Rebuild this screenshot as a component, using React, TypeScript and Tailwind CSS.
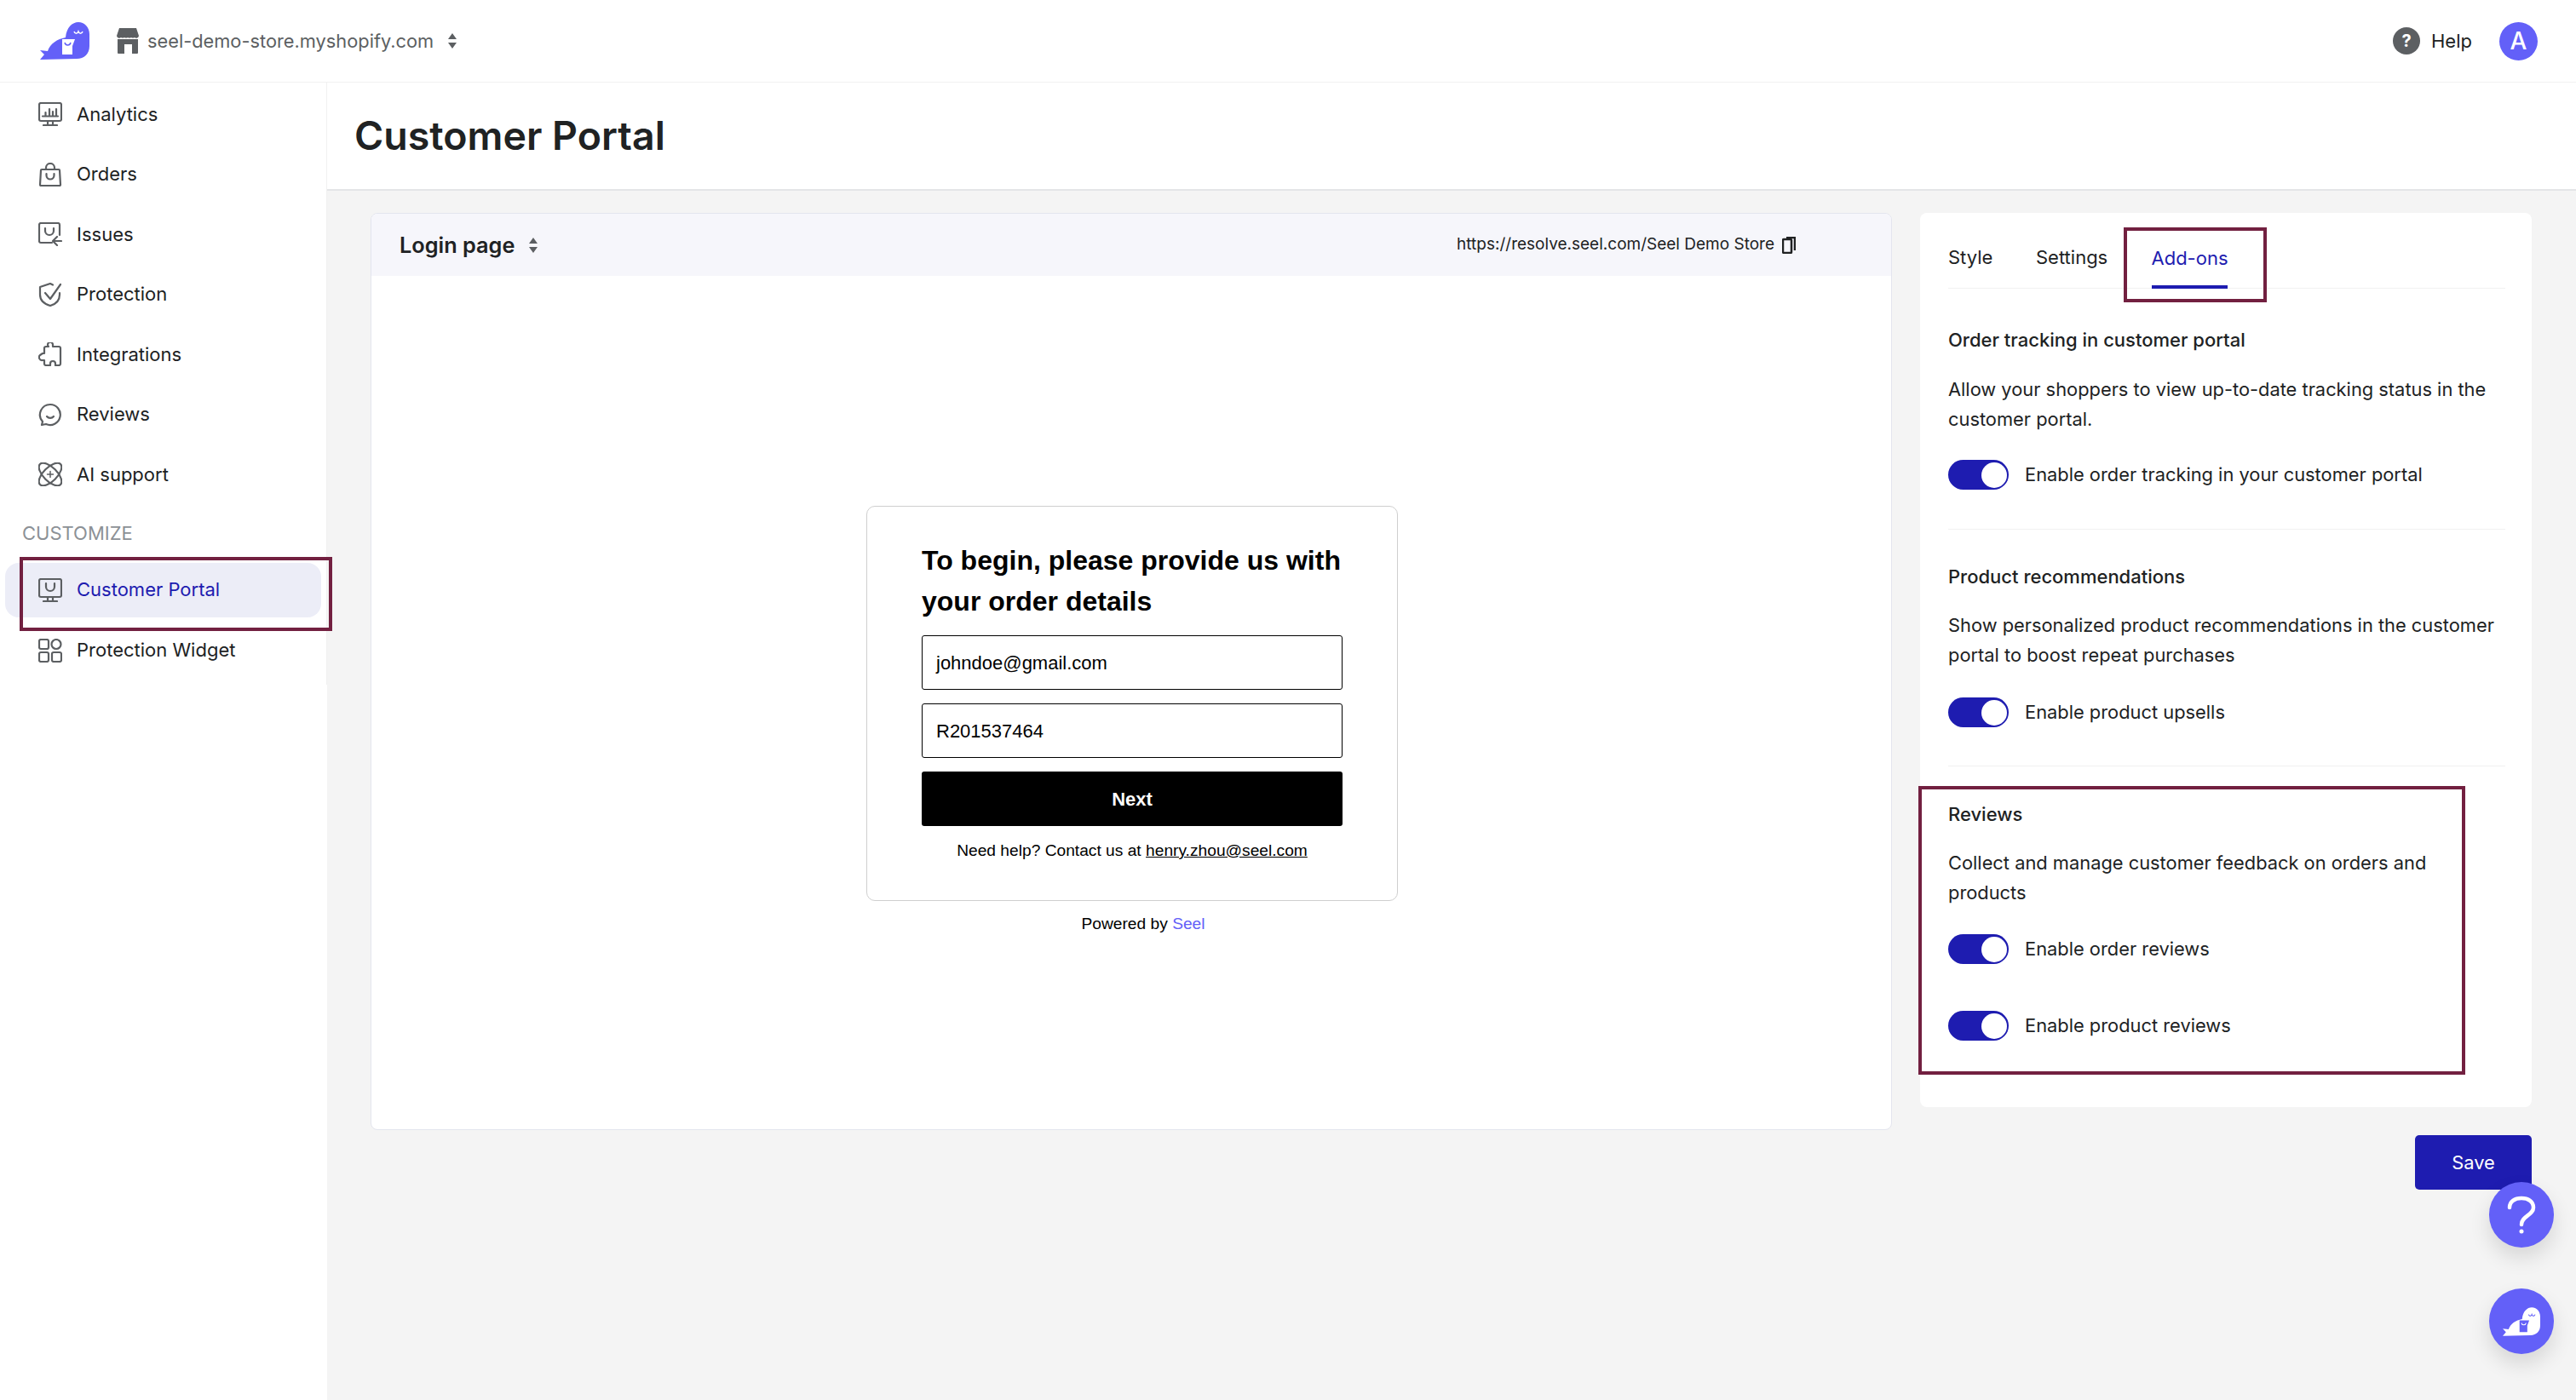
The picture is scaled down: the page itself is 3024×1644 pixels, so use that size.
import React from "react";

const Stroke = ({ children, size = 28 }: { children: React.ReactNode; size?: number }) => (
  <svg width={size} height={size} viewBox="0 0 28 28" fill="none" stroke="#5c5f62" strokeWidth="2.200" strokeLinecap="round" strokeLinejoin="round" className="shrink-0">
    {children}
  </svg>
);

const icons: Record<string, React.ReactNode> = {
  analytics: (
    <Stroke>
      <rect x="1" y="1" width="26" height="21" rx="2" />
      <path d="M5 16.500h18M8.500 16v-4M13 16V8M17 16v-5M21 16V8M11 22v5M17 22v5M6 27h16" />
    </Stroke>
  ),
  orders: (
    <Stroke>
      <path d="M4 8h20a1 1 0 0 1 1 1l1 17a1 1 0 0 1-1 1H3a1 1 0 0 1-1-1L3 9a1 1 0 0 1 1-1z" />
      <path d="M9 8V6a5 5 0 0 1 10 0v2M9.500 13v2a4.500 4.500 0 0 0 9 0v-2" />
    </Stroke>
  ),
  issues: (
    <Stroke>
      <path d="M16 24H3a2 2 0 0 1-2-2V3a2 2 0 0 1 2-2h20a2 2 0 0 1 2 2v12" />
      <path d="M8 7v3a5 5 0 0 0 10 0V7M27 22H18M22 17l-5 5 5 5" />
    </Stroke>
  ),
  protection: (
    <Stroke>
      <path d="M17 2.500 14 1 2 5v9c0 7 5 11 12 13 7-2 11-6 11-13v-2" />
      <path d="M8 12l6 7L26 2" />
    </Stroke>
  ),
  integrations: (
    <Stroke>
      <path d="M9 5h3a3 3 0 1 1 5-2v2h7a2 2 0 0 1 2 2v18a2 2 0 0 1-2 2h-4v-2a3 3 0 0 0-6 0v2H9a2 2 0 0 1-2-2v-4H5a3.500 3.500 0 0 1-3-6l3-2h2V7a2 2 0 0 1 2-2z" />
    </Stroke>
  ),
  reviews: (
    <Stroke>
      <path d="M14 2a12 12 0 1 1-5 23l-5 1 1-4A12 12 0 0 1 14 2z" />
      <path d="M10 16c2 2.500 6 2.500 8 0" />
    </Stroke>
  ),
  ai: (
    <Stroke>
      <ellipse cx="14" cy="14" rx="17" ry="8" transform="rotate(45 14 14)" />
      <ellipse cx="14" cy="14" rx="17" ry="8" transform="rotate(-45 14 14)" />
      <path d="M14 10.500v7M10.500 14h7" strokeWidth="1.500" />
    </Stroke>
  ),
  portal: (
    <Stroke>
      <rect x="1" y="1" width="26" height="21" rx="2" />
      <path d="M9 6v4a5 5 0 0 0 10 0V6M11 22v5M17 22v5M6 27h16" />
    </Stroke>
  ),
  widget: (
    <Stroke>
      <rect x="1" y="1" width="11" height="11" rx="2" />
      <circle cx="21" cy="6.500" r="5.500" />
      <rect x="1" y="16" width="11" height="11" rx="2" />
      <rect x="16" y="16" width="11" height="11" rx="2" />
    </Stroke>
  ),
};

const nav = [
  ["analytics", "Analytics"],
  ["orders", "Orders"],
  ["issues", "Issues"],
  ["protection", "Protection"],
  ["integrations", "Integrations"],
  ["reviews", "Reviews"],
  ["ai", "AI support"],
];

const Seal = ({ w, h, body, bag }: { w: number; h: number; body: string; bag: string }) => (
  <svg width={w} height={h} viewBox="0 0 58 44" className="shrink-0">
    <path
      fill={body}
      d="M0 33 L9 34 C12 25 20 20 30 18 C31 6 38 0 45 0 C52 0 58 6 58 14 L58 28 C58 37 52 43 43 43 L0 44 L5 38 Z"
    />
    <path fill={bag} d="M26 20 L41 20 L38 28 L38 38 L26 38 Z" />
    <path d="M29 24c1 4 6 4 7 0" fill="none" stroke={body} strokeWidth="1.500" />
    <path d="M40 11c1 3 4 3 5 0 1 3 4 3 5 0" fill="none" stroke={bag} strokeWidth="1.500" />
  </svg>
);

const Updown = () => (
  <svg width="10" height="18" viewBox="0 0 10 18" fill="#5c5f62" className="shrink-0">
    <path d="M5 0l5 7H0zM5 18l-5-7h10z" />
  </svg>
);

const Toggle = () => (
  <span className="flex h-[35px] w-[71px] shrink-0 items-center justify-end rounded-full bg-[#1e1cb0] pr-[2px]">
    <span className="h-[30px] w-[30px] rounded-full bg-white" />
  </span>
);

const Marker = ({ cls }: { cls: string }) => <div className={`pointer-events-none absolute border-[4px] border-[#722040] ${cls}`} />;

export default function App() {
  return (
    <div className="relative flex h-screen w-full flex-col overflow-hidden bg-white font-['Inter',sans-serif] text-[22px] text-[#202223]">
      <header className="flex h-[97px] shrink-0 items-center border-b border-[#f1f1f1] bg-white pl-[47px] pr-[45px]">
        <Seal w={58} h={44} body="#6360f8" bag="#ffffff" />
        <svg width="26" height="30" viewBox="0 0 26 30" className="ml-[32px] shrink-0" fill="#5c5f62">
          <path d="M3 0h20l3 9a3 3 0 0 1-5 2 4 4 0 0 1-4 0 4 4 0 0 1-4 0 4 4 0 0 1-4 0 4 4 0 0 1-4 0 3 3 0 0 1-5-2z" />
          <path d="M1 13h24v16a1 1 0 0 1-1 1h-6V19H9v11H2a1 1 0 0 1-1-1z" />
        </svg>
        <span className="ml-[10px] text-[21.800px] text-[#5c5f62]">seel-demo-store.myshopify.com</span>
        <span className="ml-[17px]"><Updown /></span>
        <div className="ml-auto flex items-center">
          <span className="flex h-[32px] w-[32px] items-center justify-center rounded-full bg-[#5c5f62] text-[20px] font-bold text-white">?</span>
          <span className="ml-[13px]">Help</span>
          <span className="ml-[32px] flex h-[45px] w-[45px] items-center justify-center rounded-full bg-[#6360f8] text-[28px] font-medium text-white">A</span>
        </div>
      </header>

      <div className="flex min-h-0 flex-1">
        <aside className="w-[384px] shrink-0 bg-white">
          <nav className="h-[707px] border-r border-[#f1f1f1] pt-[2px]">
            {nav.map(([k, label]) => (
              <div key={k} className="flex h-[70.500px] items-center gap-[17px] pl-[45px]">
                {icons[k]}
                <span>{label}</span>
              </div>
            ))}
            <div className="flex h-[68px] items-center pl-[26px] text-[#8c9196]">CUSTOMIZE</div>
            <div className="ml-[6px] mr-[6px] flex h-[64px] items-center gap-[17px] rounded-[16px] bg-[#ecedf7] pl-[39px] text-[#1e1cb0]">
              {icons.portal}
              <span>Customer Portal</span>
            </div>
            <div className="mt-[4px] flex h-[70px] items-center gap-[17px] pl-[45px]">
              {icons.widget}
              <span>Protection Widget</span>
            </div>
          </nav>
        </aside>

        <main className="flex min-w-0 flex-1 flex-col bg-[#f4f4f4]">
          <div className="flex h-[127px] shrink-0 items-center border-b-2 border-[#e4e5e7] bg-white pl-[32px]">
            <h1 className="text-[46.500px] font-semibold text-[#202223]">Customer Portal</h1>
          </div>
          <div className="flex gap-[33px] pl-[51px] pr-[52px] pt-[26px]">
            <section className="h-[1077px] w-[1786px] shrink-0 overflow-hidden rounded-[8px] border border-[#e3e5ee] bg-white">
              <div className="flex h-[73px] items-center bg-[#f6f6fb] pl-[33px]">
                <span className="text-[25.300px] font-semibold">Login page</span>
                <span className="ml-[17px]"><Updown /></span>
                <span className="ml-auto text-[19px]">https://resolve.seel.com/Seel Demo Store</span>
                <svg width="16" height="20" viewBox="0 0 16 20" fill="none" stroke="#202223" strokeWidth="2.500" className="ml-[9px] mr-[112px]">
                  <rect x="1" y="3" width="10" height="16" rx="1" />
                  <path d="M5 1h10v15" />
                </svg>
              </div>
              <div className="flex flex-col items-center pl-[2px] pt-[270px] font-['Liberation_Sans',sans-serif] text-black">
                <div className="h-[464px] w-[624px] rounded-[10px] border border-[#cfcfcf] px-[64px]">
                  <h2 className="mt-[39px] text-[32px] font-bold leading-[48px]">To begin, please provide us with your order details</h2>
                  <div className="mt-[16px] flex h-[64px] items-center rounded-[3px] border border-black pl-[16px] text-[22px]">johndoe@gmail.com</div>
                  <div className="mt-[16px] flex h-[64px] items-center rounded-[3px] border border-black pl-[16px] text-[22px]">R201537464</div>
                  <div className="mt-[16px] flex h-[64px] items-center justify-center rounded-[3px] bg-black text-[22px] font-bold text-white">Next</div>
                  <p className="mt-[16px] whitespace-nowrap text-center text-[19.200px] leading-[26px]">
                    Need help? Contact us at <span className="underline">henry.zhou@seel.com</span>
                  </p>
                </div>
                <p className="ml-[26px] mt-[14px] text-[19.200px] leading-[26px]">
                  Powered by <span className="text-[#6360f8]">Seel</span>
                </p>
              </div>
            </section>

            <div className="w-[718px] shrink-0">
              <section className="h-[1050px] rounded-[8px] bg-white pl-[33px] pr-[31px]">
                <div className="flex h-[89px] items-end border-b border-[#f1f1f1]">
                  <span className="mb-[19px] w-[103px]">Style</span>
                  <span className="mb-[19px] w-[136px]">Settings</span>
                  <span className="-mb-px flex h-[52px] w-[89px] justify-center whitespace-nowrap border-b-[4px] border-[#1e1cb0] text-[#1e1cb0]">Add-ons</span>
                </div>
                <h3 className="mt-[47px] font-medium leading-[26px]">Order tracking in customer portal</h3>
                <p className="mt-[28px] text-[21.850px] leading-[35px]">Allow your shoppers to view up-to-date tracking status in the customer portal.</p>
                <div className="mt-[30px] flex items-center gap-[19px] text-[21.850px]"><Toggle /><span>Enable order tracking in your customer portal</span></div>
                <div className="mt-[46px] border-b border-[#f1f1f1]" />
                <h3 className="mt-[42px] font-medium leading-[26px]">Product recommendations</h3>
                <p className="mt-[27px] text-[21.850px] leading-[35px]">Show personalized product recommendations in the customer portal to boost repeat purchases</p>
                <div className="mt-[32px] flex items-center gap-[19px] text-[21.850px]"><Toggle /><span>Enable product upsells</span></div>
                <div className="mt-[45px] border-b border-[#f1f1f1]" />
                <h3 className="mt-[43px] font-medium leading-[26px]">Reviews</h3>
                <p className="mt-[27px] w-[590px] text-[21.850px] leading-[35px]">Collect and manage customer feedback on orders and products</p>
                <div className="mt-[31px] flex items-center gap-[19px] text-[21.850px]"><Toggle /><span>Enable order reviews</span></div>
                <div className="mt-[55px] flex items-center gap-[19px] text-[21.850px]"><Toggle /><span>Enable product reviews</span></div>
              </section>
              <div className="mt-[33px] flex justify-end">
                <button className="h-[64px] w-[137px] rounded-[5px] bg-[#1e1cb0] text-[21.850px] text-white">Save</button>
              </div>
            </div>
          </div>
        </main>
      </div>

      <Marker cls="left-[23px] top-[654px] h-[87px] w-[367px]" />
      <Marker cls="left-[2493px] top-[267px] h-[88px] w-[168px]" />
      <Marker cls="left-[2252px] top-[923px] h-[339px] w-[642px]" />

      <div className="absolute left-[2922px] top-[1388px] flex h-[77px] w-[76px] items-center justify-center rounded-full bg-[#6360f8] shadow-[0_12px_24px_rgba(0,0,0,0.12)]">
        <svg width="34" height="46" viewBox="0 0 34 46" fill="none" stroke="#fff" strokeWidth="4.500" strokeLinecap="round">
          <path d="M3 14C3 7 9 3 17 3s14 4 14 11c0 9-14 10-14 20" />
          <circle cx="17" cy="42" r="2.500" fill="#fff" stroke="none" />
        </svg>
      </div>
      <div className="absolute left-[2922px] top-[1513px] flex h-[77px] w-[76px] items-center justify-center rounded-full bg-[#6360f8] shadow-[0_12px_24px_rgba(0,0,0,0.12)]">
        <Seal w={44} h={34} body="#ffffff" bag="#6360f8" />
      </div>
    </div>
  );
}
